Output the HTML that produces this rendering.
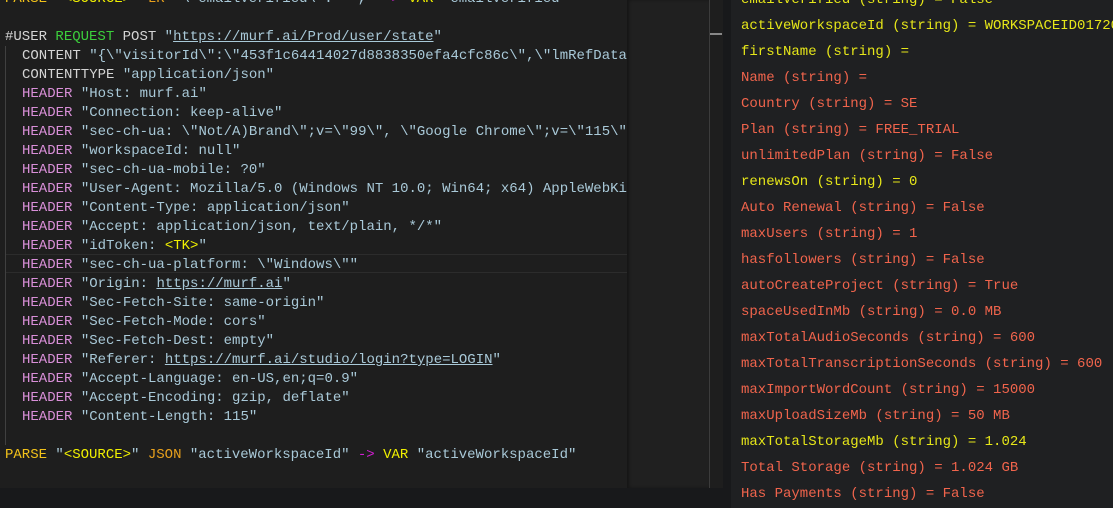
<!DOCTYPE html>
<html><head><meta charset="utf-8"><style>
*{margin:0;padding:0;box-sizing:border-box}
body{width:1113px;height:508px;background:#18191b;overflow:hidden;position:relative;font-family:"Liberation Mono",monospace;font-size:14px}
#ed{position:absolute;left:0;top:0;width:627px;height:488px;background:#1e1e1e;overflow:hidden}
#ed2{position:absolute;left:627px;top:0;width:82px;height:488px;background:#202020;box-shadow:inset 2px 0 3px rgba(0,0,0,.35)}
#vl{position:absolute;left:709px;top:0;width:1px;height:488px;background:#3c3c3c}
#sb{position:absolute;left:710px;top:0;width:13px;height:488px;background:#1e1e1e}
#th{position:absolute;left:710px;top:33px;width:12px;height:2px;background:#888}
#rp{position:absolute;left:731px;top:0;width:382px;height:508px;background:#1f2022;overflow:hidden}
.l{position:absolute;white-space:pre;line-height:19px;color:#a9c9d8}
.r{position:absolute;left:10px;white-space:pre;line-height:20px}
.y{color:#e6e619}.o{color:#f0644c}
.k{color:#d98fd8}.g{color:#3ccf3c}.w{color:#d4d4d4}.p{color:#f2c21a}.j{color:#e8a01c}.m{color:#d21fd2}.v{color:#f0f000}.u{text-decoration:underline}
#hl{position:absolute;left:5px;top:254px;width:622px;height:19px;border-top:1px solid #2c2c2c;border-bottom:1px solid #2c2c2c}
#ig{position:absolute;left:5px;top:46px;width:1px;height:399px;background:#404040}
</style></head><body>
<div id="ed">
<div id="hl"></div><div id="ig"></div>
<div class="l" style="left:5px;top:-10px"><span class="p">PARSE</span> "<span class="v">&lt;SOURCE&gt;</span>" <span class="j">LR</span> "\"emailVerified\":" "," <span class="m">-&gt;</span> <span class="v">VAR</span> "emailVerified"</div>
<div class="l" style="left:5px;top:28px"><span class="w">#USER</span> <span class="g">REQUEST</span> <span class="w">POST</span> "<span class="u">https://murf.ai/Prod/user/state</span>"</div>
<div class="l" style="left:22px;top:47px"><span class="w">CONTENT</span> "{\"visitorId\":\"453f1c64414027d8838350efa4cfc86c\",\"lmRefData</div>
<div class="l" style="left:22px;top:66px"><span class="w">CONTENTTYPE</span> "application/json"</div>
<div class="l" style="left:22px;top:85px"><span class="k">HEADER</span> "Host: murf.ai"</div>
<div class="l" style="left:22px;top:104px"><span class="k">HEADER</span> "Connection: keep-alive"</div>
<div class="l" style="left:22px;top:123px"><span class="k">HEADER</span> "sec-ch-ua: \"Not/A)Brand\";v=\"99\", \"Google Chrome\";v=\"115\"</div>
<div class="l" style="left:22px;top:142px"><span class="k">HEADER</span> "workspaceId: null"</div>
<div class="l" style="left:22px;top:161px"><span class="k">HEADER</span> "sec-ch-ua-mobile: ?0"</div>
<div class="l" style="left:22px;top:180px"><span class="k">HEADER</span> "User-Agent: Mozilla/5.0 (Windows NT 10.0; Win64; x64) AppleWebKit</div>
<div class="l" style="left:22px;top:199px"><span class="k">HEADER</span> "Content-Type: application/json"</div>
<div class="l" style="left:22px;top:218px"><span class="k">HEADER</span> "Accept: application/json, text/plain, */*"</div>
<div class="l" style="left:22px;top:237px"><span class="k">HEADER</span> "idToken: <span class="v">&lt;TK&gt;</span>"</div>
<div class="l" style="left:22px;top:256px"><span class="k">HEADER</span> "sec-ch-ua-platform: \"Windows\""</div>
<div class="l" style="left:22px;top:275px"><span class="k">HEADER</span> "Origin: <span class="u">https://murf.ai</span>"</div>
<div class="l" style="left:22px;top:294px"><span class="k">HEADER</span> "Sec-Fetch-Site: same-origin"</div>
<div class="l" style="left:22px;top:313px"><span class="k">HEADER</span> "Sec-Fetch-Mode: cors"</div>
<div class="l" style="left:22px;top:332px"><span class="k">HEADER</span> "Sec-Fetch-Dest: empty"</div>
<div class="l" style="left:22px;top:351px"><span class="k">HEADER</span> "Referer: <span class="u">https://murf.ai/studio/login?type=LOGIN</span>"</div>
<div class="l" style="left:22px;top:370px"><span class="k">HEADER</span> "Accept-Language: en-US,en;q=0.9"</div>
<div class="l" style="left:22px;top:389px"><span class="k">HEADER</span> "Accept-Encoding: gzip, deflate"</div>
<div class="l" style="left:22px;top:408px"><span class="k">HEADER</span> "Content-Length: 115"</div>
<div class="l" style="left:5px;top:446px"><span class="p">PARSE</span> "<span class="v">&lt;SOURCE&gt;</span>" <span class="j">JSON</span> "activeWorkspaceId" <span class="m">-&gt;</span> <span class="v">VAR</span> "activeWorkspaceId"</div>
</div>
<div id="ed2"></div><div id="vl"></div><div id="sb"></div><div id="th"></div>
<div id="rp">
<div class="r y" style="top:-10px">emailVerified (string) = False</div>
<div class="r y" style="top:16px">activeWorkspaceId (string) = WORKSPACEID01720</div>
<div class="r y" style="top:42px">firstName (string) =</div>
<div class="r o" style="top:68px">Name (string) =</div>
<div class="r o" style="top:94px">Country (string) = SE</div>
<div class="r o" style="top:120px">Plan (string) = FREE_TRIAL</div>
<div class="r o" style="top:146px">unlimitedPlan (string) = False</div>
<div class="r y" style="top:172px">renewsOn (string) = 0</div>
<div class="r o" style="top:198px">Auto Renewal (string) = False</div>
<div class="r o" style="top:224px">maxUsers (string) = 1</div>
<div class="r o" style="top:250px">hasfollowers (string) = False</div>
<div class="r o" style="top:276px">autoCreateProject (string) = True</div>
<div class="r o" style="top:302px">spaceUsedInMb (string) = 0.0 MB</div>
<div class="r o" style="top:328px">maxTotalAudioSeconds (string) = 600</div>
<div class="r o" style="top:354px">maxTotalTranscriptionSeconds (string) = 600</div>
<div class="r o" style="top:380px">maxImportWordCount (string) = 15000</div>
<div class="r o" style="top:406px">maxUploadSizeMb (string) = 50 MB</div>
<div class="r y" style="top:432px">maxTotalStorageMb (string) = 1.024</div>
<div class="r o" style="top:458px">Total Storage (string) = 1.024 GB</div>
<div class="r o" style="top:484px">Has Payments (string) = False</div>
</div>
</body></html>
